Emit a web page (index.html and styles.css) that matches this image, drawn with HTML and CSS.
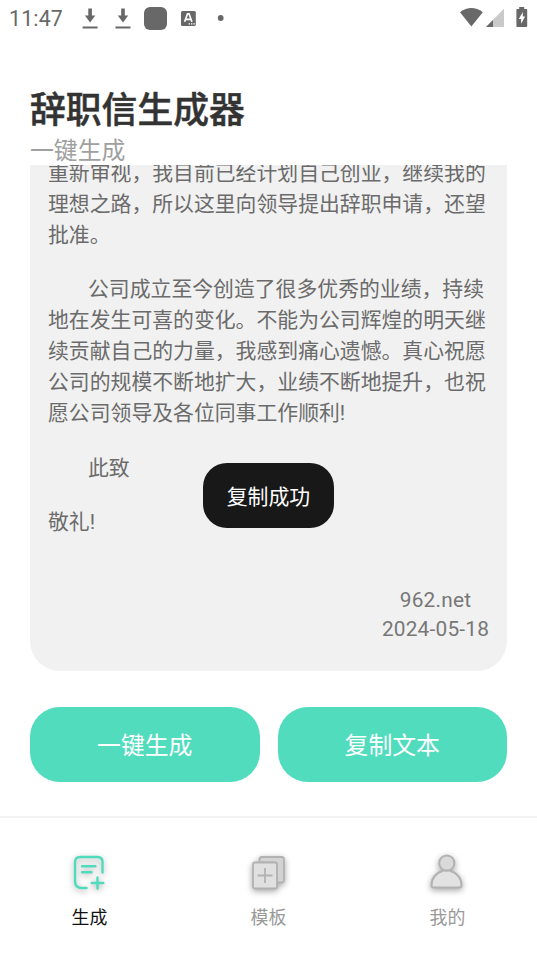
FILE: index.html
```
<!DOCTYPE html>
<html lang="zh-CN">
<head>
<meta charset="utf-8">
<title>辞职信生成器</title>
<link rel="stylesheet" href="styles.css">
</head>
<body>
<div class="app">
  <div class="status">
    <span class="clock">11:47</span>
    <svg class="status-left" width="150" height="36" viewBox="0 0 150 36" fill="#686868">
      <path d="M9.300 8.500h3.600v7h3.400l-5.200 7-5.200-7h3.400zM3.600 26.600h15v1.900h-15z"/>
      <path d="M42.200 8.500h3.600v7h3.400l-5.200 7-5.200-7h3.400zM36.500 26.600h15v1.900h-15z"/>
      <rect x="65" y="7" width="23" height="23" rx="6"/>
      <rect x="102" y="11" width="14.800" height="15" rx="1.500"/>
      <path d="M105.600 21.800l2.900-8h1.500l2.900 8M106.700 19.400h5" fill="none" stroke="#fff" stroke-width="1.700"/>
      <path d="M109.600 23.200h1.400v1.300h-1.400zm2.400 0h1.400v1.300H112zm2.400 0h1.400v1.300h-1.400z" fill="#fff"/>
      <circle cx="141.700" cy="18" r="2.900"/>
    </svg>
    <svg class="status-right" width="77" height="36" viewBox="0 0 77 36" fill="#686868">
      <path d="M0 12.200Q11.400 3.800 22.800 12.200L11.400 26.400z"/>
      <path d="M44 8.800V27H26z" fill="#c9c9c9"/>
      <path d="M33 20v7h-7z"/>
      <path d="M57.200 9h2V7h5v2h2.200q.8 0 .8.8v16.400q0 .8-.8.8h-9.200q-.8 0-.8-.8V9.800q0-.8.8-.8z"/>
      <path d="M62.800 12l-4 7h2.300v4.800l4-7.200h-2.300z" fill="#fff"/>
    </svg>
  </div>
  <header class="head">
    <h1 class="title">辞职信生成器</h1>
    <p class="subtitle">一键生成</p>
  </header>
  <main class="letter">
    <div class="letter-body">
      <p class="para">重新审视，我目前已经计划自己创业，继续我的<br>理想之路，所以这里向领导提出辞职申请，还望<br>批准。</p>
      <p class="para indent">公司成立至今创造了很多优秀的业绩，持续<br>地在发生可喜的变化。不能为公司辉煌的明天继<br>续贡献自己的力量，我感到痛心遗憾。真心祝愿<br>公司的规模不断地扩大，业绩不断地提升，也祝<br>愿公司领导及各位同事工作顺利!</p>
      <p class="para indent">此致</p>
      <p class="para">敬礼!</p>
      <div class="sign"><span>962.net</span><span>2024-05-18</span></div>
    </div>
  </main>
  <div class="actions">
    <button class="btn">一键生成</button>
    <button class="btn">复制文本</button>
  </div>
  <nav class="tabs">
    <a class="tab active">
      <svg class="icon" width="48" height="48" viewBox="0 0 48 48" fill="none" stroke="#4fdcbc" stroke-width="2.400" stroke-linecap="round" stroke-linejoin="round">
        <path d="M20.500 40h-4.500q-7 0-7-7V14q0-5 5-5h17.500q5 0 5 5v10.500M16 18.300h13.500M16 24.300h9.500M31.500 29.500v11M25.700 35h11.600"/>
      </svg>
      <span>生成</span>
    </a>
    <a class="tab">
      <svg class="icon" width="48" height="48" viewBox="0 0 48 48" fill="none" stroke="#b2b2b2" stroke-width="1.800" stroke-linejoin="round">
        <path d="M14.500 14.500v-3q0-2.500 2.500-2.500h19.500q2.500 0 2.500 2.500V32q0 2.500-2.500 2.500H32V17q0-2.500-2.500-2.500z" fill="#d3d3d3"/>
        <rect x="8" y="14.500" width="24" height="26" rx="2" fill="#e0e0e0"/>
        <path d="M20 20v15M12.500 27.500h15"/>
      </svg>
      <span>模板</span>
    </a>
    <a class="tab">
      <svg class="icon" width="48" height="48" viewBox="0 0 48 48" fill="#e2e2e2" stroke="#b2b2b2" stroke-width="2">
        <path d="M7.500 37.500q0-11 12-15h6q12 4 12 15 0 2-2.500 2H10q-2.500 0-2.500-2z"/>
        <circle cx="22.800" cy="15" r="7.600" fill="#d9d9d9"/>
      </svg>
      <span>我的</span>
    </a>
  </nav>
  <div class="toast">复制成功</div>
</div>
</body>
</html>
```
FILE: styles.css
```
* { box-sizing: border-box; margin: 0; padding: 0; }
body {
  background: #fff;
  font-family: Roboto, "Noto Sans CJK SC", sans-serif;
  color: #686868;
}
.app {
  position: relative;
  width: 537px;
  height: 956px;
  display: flex;
  flex-direction: column;
  overflow: hidden;
}
.status {
  height: 36px;
  display: flex;
  align-items: center;
  padding: 0 0 0 9px;
}
.clock { width: 70px; font-size: 21.300px; letter-spacing: 0.200px; line-height: 36px; padding-top: 2px; }
.status-left { flex: none; }
.status-right { flex: none; margin-left: auto; }
.head { height: 129px; padding: 48px 30px 0; }
.title { font-size: 35.800px; font-weight: 500; line-height: 54px; color: #333; -webkit-text-stroke: 0.500px #333; }
.subtitle { font-size: 23.870px; line-height: 26px; color: #a0a0a0; }
.letter {
  height: 506px;
  margin: 0 30px;
  padding: 0 18px;
  background: #f1f1f1;
  border-radius: 0 0 30px 30px;
  overflow: hidden;
}
.letter-body { margin-top: -7px; font-size: 20.850px; line-height: 30.850px; white-space: nowrap; color: #6b6b6b; }
.para { margin-bottom: 23.900px; }
.indent { text-indent: 40px; }
.sign {
  display: flex;
  flex-direction: column;
  align-items: center;
  width: 107px;
  margin: 48px 0 0 auto;
  line-height: 29px;
  color: #777;
  letter-spacing: 0.200px;
}
.actions { display: flex; gap: 18px; padding: 36px 30px 34px; }
.btn {
  flex: 1;
  height: 75px;
  padding-bottom: 2px;
  border: 0;
  border-radius: 30px;
  background: #50dcbd;
  color: #fff;
  font: 400 23.870px Roboto, "Noto Sans CJK SC", sans-serif;
}
.tabs { flex: 1; display: flex; border-top: 2px solid #f3f3f3; padding-top: 30px; }
.tab {
  flex: 1;
  display: flex;
  flex-direction: column;
  align-items: center;
  font-size: 17.900px;
  line-height: 26px;
  color: #999;
}
.tab span { margin-top: 9px; }
.tab.active { color: #111; }
.icon { filter: drop-shadow(0 2px 3px rgba(0, 0, 0, 0.350)); }
.toast {
  position: absolute;
  left: 203px;
  top: 463px;
  width: 131px;
  height: 65px;
  border-radius: 24px;
  background: #181818;
  color: #fff;
  font-size: 20.880px;
  line-height: 68px;
  text-align: center;
}
```
